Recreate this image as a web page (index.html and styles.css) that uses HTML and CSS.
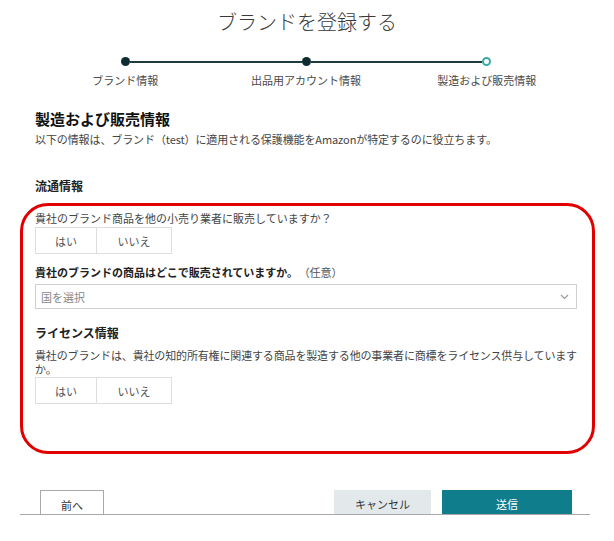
FILE: index.html
```html
<!DOCTYPE html>
<html lang="ja">
<head>
    <meta charset="UTF-8">
    <meta name="viewport" content="width=device-width, initial-scale=1.0">
    <title>ブランドを登録する</title>
    <link rel="stylesheet" href="styles.css">
</head>
<body>
    <div class="page">
        <h1 class="title">ブランドを登録する</h1>

        <div class="stepper">
            <div class="track">
                <span class="dot done"></span>
                <span class="line"></span>
                <span class="dot done"></span>
                <span class="line"></span>
                <span class="dot current"></span>
            </div>
            <div class="stepLabels">
                <span>ブランド情報</span>
                <span>出品用アカウント情報</span>
                <span>製造および販売情報</span>
            </div>
        </div>

        <h2 class="heading">製造および販売情報</h2>
        <p class="subtitle">以下の情報は、ブランド（test）に適用される保護機能をAmazonが特定するのに役立ちます。</p>

        <h3 class="section">流通情報</h3>

        <div class="highlight">
            <p class="question">貴社のブランド商品を他の小売り業者に販売していますか？</p>
            <div class="toggle">
                <button type="button" class="yes">はい</button>
                <button type="button" class="no">いいえ</button>
            </div>

            <p class="question strong">貴社のブランドの商品はどこで販売されていますか。<span class="optional">（任意）</span></p>
            <div class="select">
                <span class="placeholder">国を選択</span>
                <svg class="chevron" width="9" height="6" viewBox="0 0 9 6"><path d="M1 1l3.5 3.5L8 1" fill="none" stroke="#999" stroke-width="1.2"/></svg>
            </div>

            <h3 class="section license">ライセンス情報</h3>
            <p class="question long">貴社のブランドは、貴社の知的所有権に関連する商品を製造する他の事業者に商標をライセンス供与していますか。</p>
            <div class="toggle">
                <button type="button" class="yes">はい</button>
                <button type="button" class="no">いいえ</button>
            </div>
        </div>

        <div class="footer">
            <button type="button" class="prevButton">前へ</button>
            <div class="spacer"></div>
            <button type="button" class="cancelButton">キャンセル</button>
            <button type="button" class="submitButton">送信</button>
        </div>
    </div>
</body>
</html>
```

FILE: styles.css
```css
body {
    margin: 0;
    padding: 0;
    background: #fff;
    font-family: "Noto Sans CJK JP", "Noto Sans", sans-serif;
    color: #333;
}

.page {
    padding: 8px 37px 0 35px;
}

p, h1, h2, h3 {
    margin: 0;
}

.title {
    font-size: 20px;
    line-height: 28px;
    font-weight: 300;
    text-align: center;
    color: #3a3a3a;
    margin-left: 2px;
}

.stepper {
    margin-top: 21px;
}

.track {
    display: flex;
    align-items: center;
    padding: 0 86px;
    height: 9px;
}

.dot {
    width: 9px;
    height: 9px;
    border-radius: 50%;
    box-sizing: border-box;
    flex-shrink: 0;
}

.dot.done {
    background: #0d2c31;
}

.dot.current {
    border: 2px solid #3aa8a8;
    background: #fff;
}

.line {
    flex: 1;
    height: 2px;
    background: #1e3b40;
}

.stepLabels {
    display: grid;
    grid-template-columns: 1fr 1fr 1fr;
    margin-top: 6px;
    font-size: 11px;
    line-height: 16px;
    color: #4a4a4a;
    text-align: center;
}

.heading {
    margin-top: 20px;
    font-size: 15px;
    line-height: 22px;
    font-weight: bold;
    color: #111;
}

.subtitle {
    margin-top: 1px;
    font-size: 11px;
    line-height: 16px;
    color: #444;
    letter-spacing: -0.1px;
}

.section {
    margin-top: 30px;
    font-size: 12px;
    line-height: 18px;
    font-weight: bold;
    color: #222;
}

.highlight {
    margin: 8px -18px 0 -15px;
    padding: 4px 15px 47px 12px;
    border: 3px solid #e10000;
    border-radius: 28px;
}

.question {
    font-size: 11px;
    line-height: 16px;
    color: #444;
}

.question.strong {
    margin-top: 10px;
    font-weight: bold;
    color: #222;
}

.optional {
    font-weight: normal;
    color: #555;
    margin-left: 6px;
}

.toggle {
    display: flex;
    margin-top: 1px;
}

.toggle button {
    height: 27px;
    border: 1px solid #dedede;
    background: #fff;
    font-family: inherit;
    font-size: 11px;
    color: #555;
    padding: 0;
    margin: 0;
}

.toggle .yes {
    width: 62px;
}

.toggle .no {
    width: 75px;
    border-left: none;
}

.select {
    margin-top: 4px;
    height: 25px;
    box-sizing: border-box;
    border: 1px solid #cfcfcf;
    display: flex;
    align-items: center;
    justify-content: space-between;
    padding: 0 7px 0 5px;
}

.placeholder {
    font-size: 11px;
    color: #888;
}

.section.license {
    margin-top: 15px;
}

.question.long {
    margin-top: 6px;
    margin-right: -10px;
    letter-spacing: -0.15px;
    line-height: 14px;
}

.footer {
    display: flex;
    align-items: flex-end;
    margin: 36px -13px 0 -15px;
    padding: 0 18px 0 20px;
    border-bottom: 1px solid #a8a8a8;
}

.spacer {
    flex: 1;
}

.footer button {
    height: 24px;
    padding: 4px 0 0;
    margin: 0;
    font-family: inherit;
    font-size: 11px;
    border: none;
}

.prevButton {
    width: 64px;
    background: #fff;
    border: 1px solid #a9a9a9 !important;
    border-bottom: none !important;
    color: #333;
}

.cancelButton {
    width: 97px;
    background: #e3e9eb;
    color: #333;
    margin-right: 11px !important;
}

.submitButton {
    width: 130px;
    background: #0f7d8b;
    color: #fff;
}
```
